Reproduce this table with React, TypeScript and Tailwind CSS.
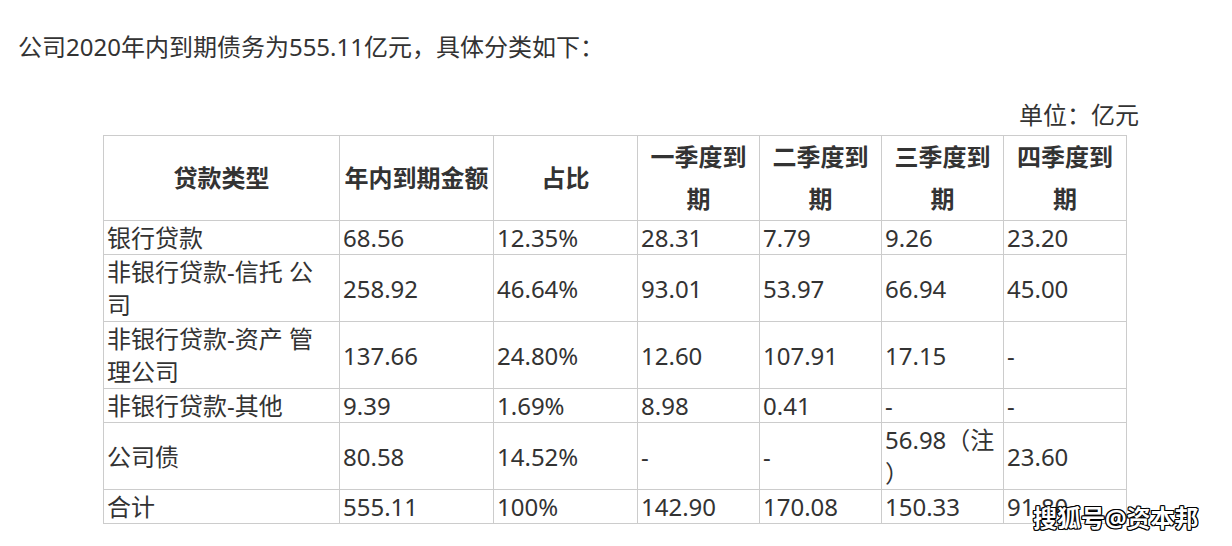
import React from "react";

const rows: { name: React.ReactNode; cells: React.ReactNode[] }[] = [
  { name: "银行贷款", cells: ["68.56", "12.35%", "28.31", "7.79", "9.26", "23.20"] },
  { name: "非银行贷款-信托 公司", cells: ["258.92", "46.64%", "93.01", "53.97", "66.94", "45.00"] },
  { name: "非银行贷款-资产 管理公司", cells: ["137.66", "24.80%", "12.60", "107.91", "17.15", "-"] },
  { name: "非银行贷款-其他", cells: ["9.39", "1.69%", "8.98", "0.41", "-", "-"] },
  {
    name: "公司债",
    cells: [
      "80.58",
      "14.52%",
      "-",
      "-",
      <>
        56.98（注
        <br />）
      </>,
      "23.60",
    ],
  },
  { name: "合计", cells: ["555.11", "100%", "142.90", "170.08", "150.33", "91.80"] },
];

const headers = ["贷款类型", "年内到期金额", "占比", "一季度到期", "二季度到期", "三季度到期", "四季度到期"];

export default function App() {
  return (
    <div className="relative w-[1232px] h-[546px] overflow-hidden bg-white text-[24px] text-[#333333] font-['Noto_Sans','Noto_Sans_CJK_SC',sans-serif]">
      <p className="pl-[18px] pt-[30px] leading-[33px]">公司2020年内到期债务为555.11亿元，具体分类如下：</p>
      <p className="mt-[35px] pr-[93px] text-right leading-[33px]">单位：亿元</p>
      <table className="ml-[103px] mt-[4px] w-[1023px] table-fixed border-collapse">
        <colgroup>
          <col className="w-[236px]" />
          <col className="w-[154px]" />
          <col className="w-[144px]" />
          <col className="w-[122px]" />
          <col className="w-[122px]" />
          <col className="w-[122px]" />
          <col className="w-[123px]" />
        </colgroup>
        <thead>
          <tr>
            {headers.map((h) => (
              <th
                key={h}
                className="border border-[#cccccc] px-[3px] py-0 text-center align-middle font-bold leading-[42px]"
              >
                {h}
              </th>
            ))}
          </tr>
        </thead>
        <tbody>
          {rows.map((r, i) => (
            <tr key={i}>
              <td className="border border-[#cccccc] px-[3px] py-0 align-middle leading-[33px]">{r.name}</td>
              {r.cells.map((c, j) => (
                <td key={j} className="border border-[#cccccc] px-[3px] py-0 align-middle leading-[33px]">
                  {c}
                </td>
              ))}
            </tr>
          ))}
        </tbody>
      </table>
      <div className="absolute left-[1033px] top-[503px] font-bold text-[24px] leading-[30px] text-white [text-shadow:1px_1px_0_#000,-1px_-1px_0_#000,1px_-1px_0_#000,-1px_1px_0_#000,0_1px_0_#000,0_-1px_0_#000,1px_0_0_#000,-1px_0_0_#000]">
        搜狐号@资本邦
      </div>
    </div>
  );
}
